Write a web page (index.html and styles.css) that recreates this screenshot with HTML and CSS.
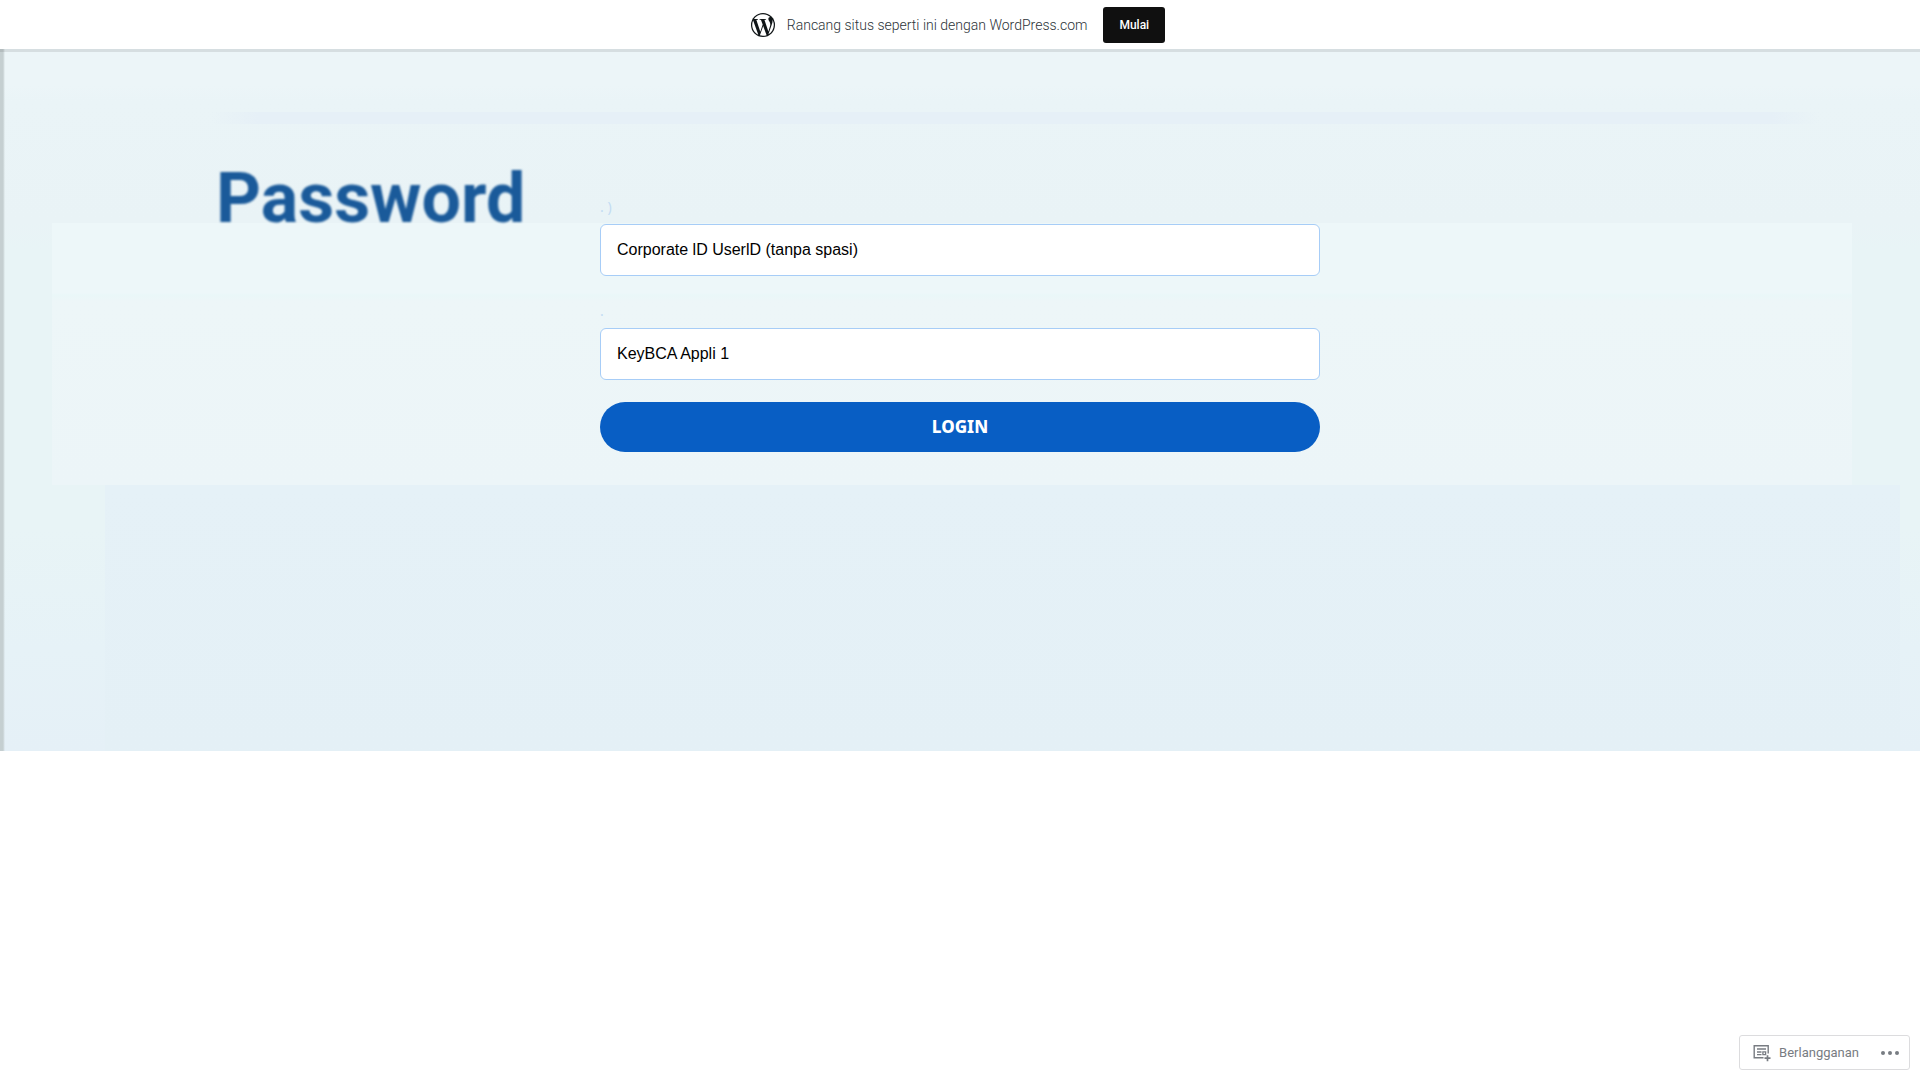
FILE: index.html
```html
<!DOCTYPE html>
<html lang="id">
<head>
<meta charset="utf-8">
<meta name="viewport" content="width=device-width, initial-scale=1">
<title>Login</title>
<link rel="stylesheet" href="styles.css">
</head>
<body>
<header class="banner">
  <svg class="banner-logo" viewBox="2 2 20 20" aria-hidden="true">
    <circle cx="12" cy="12" r="10" fill="currentColor"/>
    <path fill="#fff" d="M12.158 12.786l-2.698 7.84c.806.236 1.657.365 2.54.365 1.047 0 2.051-.18 2.986-.51-.024-.037-.046-.078-.065-.123l-2.762-7.57zM3.009 12c0 3.559 2.068 6.634 5.067 8.092L3.788 8.341C3.289 9.459 3.009 10.696 3.009 12zm15.06-.454c0-1.112-.399-1.881-.741-2.48-.456-.741-.883-1.368-.883-2.109 0-.826.627-1.596 1.51-1.596.04 0 .078.005.116.007C16.472 3.904 14.34 3.009 12 3.009c-3.141 0-5.904 1.612-7.512 4.052.211.007.41.011.579.011.94 0 2.396-.114 2.396-.114.484-.028.541.684.057.741 0 0-.487.057-1.029.085l3.274 9.739 1.968-5.901-1.401-3.838c-.484-.028-.943-.085-.943-.085-.485-.029-.428-.769.057-.741 0 0 1.484.114 2.368.114.94 0 2.397-.114 2.397-.114.485-.028.542.684.057.741 0 0-.488.057-1.029.085l3.249 9.665.897-2.996c.456-1.169.684-2.137.684-2.907zm1.82-3.86c.039.286.06.593.06.924 0 .912-.171 1.938-.684 3.22l-2.746 7.94c2.673-1.558 4.47-4.454 4.47-7.771 0-1.563-.399-3.033-1.1-4.314z"/>
  </svg>
  <span class="banner-text">Rancang situs seperti ini dengan WordPress.com</span>
  <button class="banner-button" type="button">Mulai</button>
</header>
<main class="hero">
  <h1 class="hero-title">Password</h1>
  <form class="login">
    <label class="login-label" for="user">. )</label>
    <input class="login-input" id="user" type="text" placeholder="Corporate lD UserlD (tanpa spasi)">
    <label class="login-label" for="key">.</label>
    <input class="login-input" id="key" type="text" placeholder="KeyBCA Appli 1">
    <button class="login-button" type="submit">LOGIN</button>
  </form>
</main>
<div class="actionbar">
  <button class="actionbar-follow" type="button">
    <svg class="follow-icon" viewBox="0 0 18 18" fill="none" stroke="currentColor" aria-hidden="true">
      <path stroke-width="1.4" d="M10.5 13.7H1.2V1.7h14v7.8"/>
      <path stroke-width="1.3" d="M4 5h9M4 8h4.500M4 10.600h4.500M9.900 7.900h2.700v2.700H9.900z"/>
      <path stroke-width="1.700" d="M14.500 11.200v6M11.500 14.200h6"/>
    </svg>
    Berlangganan
  </button>
  <button class="actionbar-more" type="button" aria-label="Lainnya">
    <svg class="more-icon" viewBox="0 0 18 4" fill="currentColor" aria-hidden="true">
      <circle cx="2" cy="2" r="2"/><circle cx="9" cy="2" r="2"/><circle cx="16" cy="2" r="2"/>
    </svg>
  </button>
</div>
</body>
</html>
```
FILE: styles.css
```css
* { box-sizing: border-box; }

body {
  margin: 0;
  background: #fff;
  font-family: "Noto Sans", sans-serif;
}

button { cursor: pointer; }

.banner {
  position: relative;
  display: flex;
  align-items: center;
  justify-content: center;
  height: 49px;
  padding: 0 12px 0 8px;
  background: #fff;
  box-shadow: 0 3px 0 rgba(0, 0, 0, 0.09);
  font-family: Roboto, sans-serif;
}

.banner-logo {
  width: 24px;
  height: 24px;
  margin-right: 12px;
  color: #101517;
}

.banner-text {
  margin-right: 16px;
  font-size: 14px;
  font-weight: 300;
  color: #2c3338;
}

.banner-button {
  height: 36px;
  padding: 0 16px;
  border: 0;
  border-radius: 3px;
  background: #101010;
  color: #fff;
  font: 500 12px Roboto, sans-serif;
}

.hero {
  display: grid;
  grid-template-columns: 1fr minmax(0, 720px) 1fr;
  align-items: start;
  min-height: 702px;
  padding-top: 107px;
  background:
    linear-gradient(90deg, #c5cfd1 0 3px, transparent 5px),
    linear-gradient(90deg, transparent, #e6f0f7 3% 97%, transparent) 210px 63px / calc(100% - 310px) 12px no-repeat,
    linear-gradient(#edf7f9 0, #edf7f9 70px, #eaf7f8 72px, #edf6f8 78px, #ecf5f8) 52px 174px / calc(100% - 120px) 262px no-repeat,
    linear-gradient(#e5f1f7, #e4f0f6) 105px 436px / calc(100% - 125px) 266px no-repeat,
    linear-gradient(#ecf5f8 0, #ecf5f8 36px, #eaf4f7 52px, #e9f3f6 174px, #e8f4f6 200px, #e8f4f6 480px, #e6f2f7 600px, #e5f0f7);
}

.hero-title {
  margin: 0 0 0 216px;
  color: #1a5a9a;
  font: 700 70px/84px Roboto, sans-serif;
  filter: blur(1px);
}

.login {
  display: flex;
  flex-direction: column;
  grid-column: 2;
  padding-top: 36px;
}

.login-label {
  height: 32px;
  color: #c3dcf3;
  font-size: 14px;
  line-height: 30px;
}

.login-input {
  height: 52px;
  margin-bottom: 20px;
  padding: 0 16px;
  border: 1px solid #a7cdf7;
  border-radius: 6px;
  background: #fff;
  color: #000;
  font: 16px "Liberation Sans", sans-serif;
}

.login-input::placeholder { color: #000; opacity: 1; }

.login-button {
  height: 50px;
  margin-top: 2px;
  padding: 0 0 2px;
  border: 0;
  border-radius: 25px;
  background: #085ec4;
  color: #fff;
  font: 800 17px "Noto Sans", sans-serif;
}

.actionbar {
  position: fixed;
  right: 10px;
  bottom: 10px;
  display: flex;
  align-items: center;
  height: 35px;
  padding: 0 10px 0 13px;
  border: 1px solid #dcdcde;
  border-radius: 3px;
  background: #fff;
  color: #787c82;
}

.actionbar-follow,
.actionbar-more {
  display: flex;
  align-items: center;
  padding: 0;
  border: 0;
  background: none;
  color: inherit;
}

.actionbar-follow {
  gap: 8px;
  margin-right: 22px;
  font: 400 13px Roboto, sans-serif;
}

.follow-icon { width: 18px; height: 18px; }
.more-icon { width: 18px; height: 4px; }
```
